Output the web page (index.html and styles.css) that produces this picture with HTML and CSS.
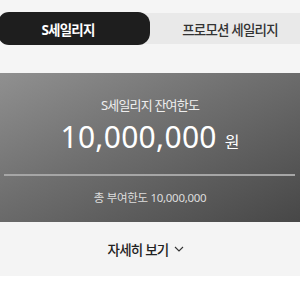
FILE: index.html
```html
<!DOCTYPE html>
<html lang="ko">
<head>
<meta charset="utf-8">
<link rel="stylesheet" href="styles.css">
</head>
<body>
<div class="page">
  <div class="tabs">
    <div class="tab active">S세일리지</div>
    <div class="tab">프로모션 세일리지</div>
  </div>
  <div class="card">
    <div class="card-title">S세일리지 잔여한도</div>
    <div class="amount"><span class="num">10,000,000</span><span class="unit">원</span></div>
    <div class="divider"></div>
    <div class="total">총 부여한도 10,000,000</div>
  </div>
  <div class="more">
    <span>자세히 보기</span>
    <svg width="10" height="6" viewBox="0 0 10 6"><path d="M1 1l4 4 4-4" fill="none" stroke="#333" stroke-width="1.1"/></svg>
  </div>
</div>
</body>
</html>
```
FILE: styles.css
```css
* { box-sizing: border-box; }
html, body { margin: 0; padding: 0; background: #fff; }
body { font-family: "Noto Sans", "Noto Sans CJK KR", sans-serif; }
.page { width: 300px; height: 300px; background: #fff; }
.tabs {
  display: flex;
  background: #f5f5f5;
  padding: 12px 0 28px;
}
.tab {
  height: 33px;
  display: flex;
  align-items: center;
  justify-content: center;
  font-size: 13.5px;
  letter-spacing: -0.8px;
  color: #333;
  font-weight: 500;
}
.tab:nth-child(2) {
  flex: 1;
  background: #e9e9e9;
  margin: 1px 0 1px -12px;
  height: 31px;
  padding-left: 22px;
}
.tab.active {
  width: 152px;
  margin-left: -2px;
  padding-right: 12px;
  background: #1e1e1e;
  color: #fff;
  font-weight: 700;
  border-radius: 11px 12px 12px 11px;
  position: relative;
  z-index: 1;
}
.card {
  height: 149px;
  background: linear-gradient(155deg, #909090 0%, #6e6e6e 45%, #474747 100%);
  display: flex;
  flex-direction: column;
  align-items: center;
  padding-top: 22px;
  color: #fff;
}
.card-title { font-size: 13px; letter-spacing: -0.8px; color: #eee; line-height: 20px; }
.amount {
  display: flex;
  align-items: baseline;
  gap: 8px;
  margin-top: 2px;
  line-height: 40px;
}
.num { font-size: 30px; font-weight: 400; letter-spacing: 0.3px; }
.unit { font-size: 16px; }
.divider {
  width: 291px;
  height: 2px;
  background: #a6a6a6;
  margin-top: 12px;
  align-self: flex-start;
  margin-left: 4px;
}
.total { font-size: 11.5px; letter-spacing: -0.3px; color: #ddd; margin-top: 13px; line-height: 18px; }
.more {
  height: 54px;
  background: #f4f4f4;
  display: flex;
  align-items: center;
  justify-content: center;
  gap: 6px;
  font-size: 13.5px;
  letter-spacing: -0.8px;
  font-weight: 500;
  color: #222;
  padding-right: 8px;
}
```
